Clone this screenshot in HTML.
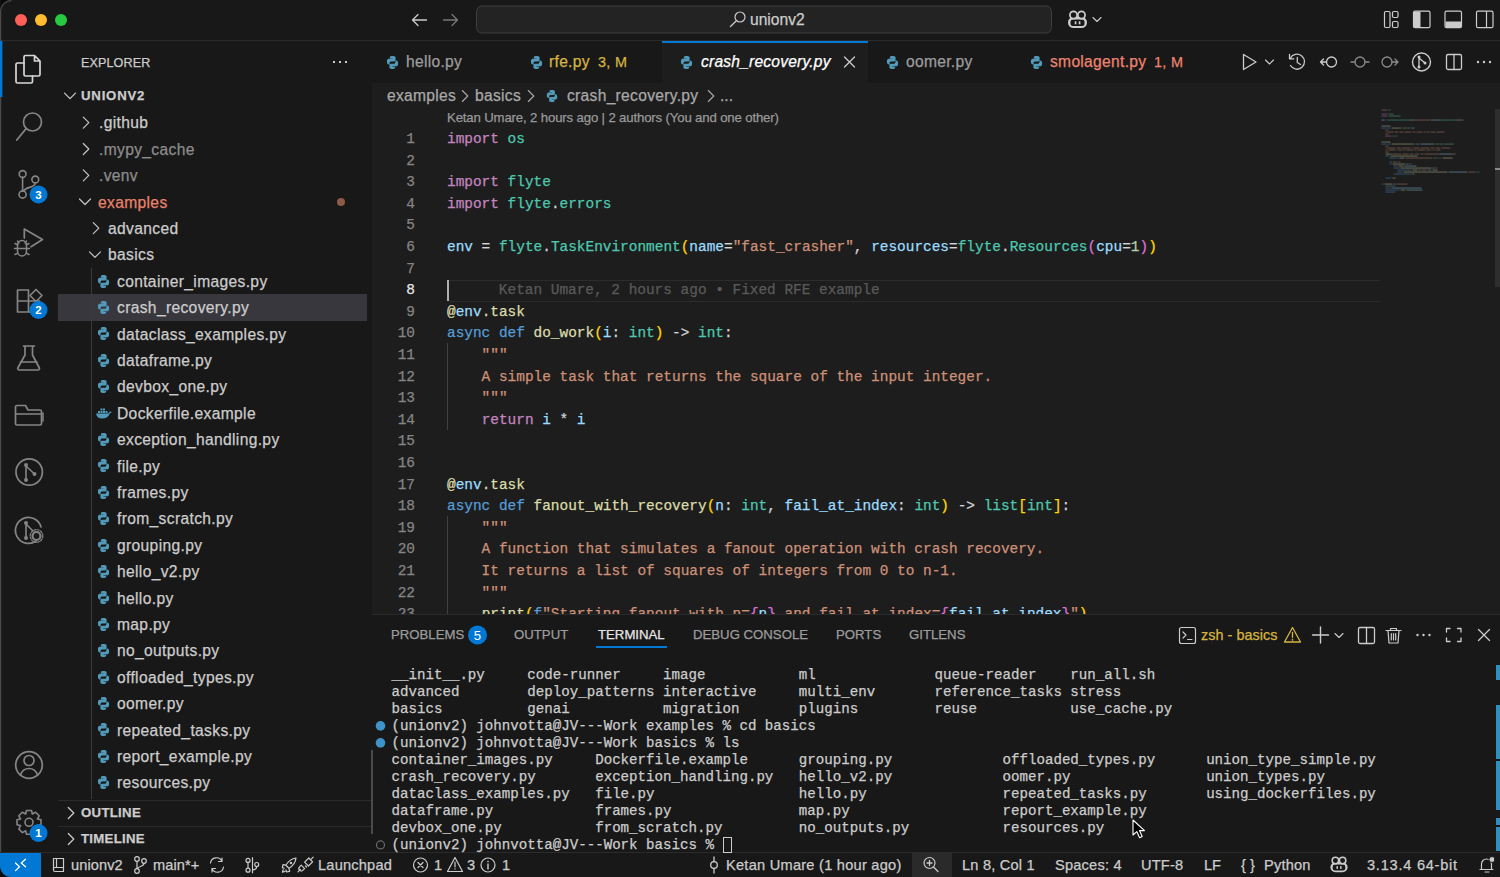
<!DOCTYPE html>
<html><head><meta charset="utf-8">
<style>
*{box-sizing:border-box;margin:0;padding:0}
html,body{width:1500px;height:877px;overflow:hidden;background:#181818;font-family:"Liberation Sans",sans-serif;color:#cccccc}
.abs{position:absolute}
.t{position:absolute;white-space:pre;-webkit-text-stroke:0.25px currentColor}
.m{font-family:"Liberation Mono",monospace}
svg{position:absolute;overflow:visible}
</style></head><body>
<svg width="0" height="0" style="position:absolute;left:0;top:0">
<defs>
<symbol id="py" viewBox="0 0 16 16"><path fill="#519aba" d="M7.9 1C5 1 5.2 2.3 5.2 2.3V3.6H8V4H4C4 4 2 3.8 2 7C2 10.2 3.8 10 3.8 10H4.9V8.6C4.9 8.6 4.8 6.8 6.6 6.8H9.6C9.6 6.8 11.3 6.8 11.3 5.2V2.6C11.3 2.6 11.5 1 7.9 1Z M8.1 15C11 15 10.8 13.7 10.8 13.7V12.4H8V12H12C12 12 14 12.2 14 9C14 5.8 12.2 6 12.2 6H11.1V7.4C11.1 7.4 11.2 9.2 9.4 9.2H6.4C6.4 9.2 4.7 9.2 4.7 10.8V13.4C4.7 13.4 4.5 15 8.1 15Z"/></symbol>
</defs>
</svg>

<div class="abs" style="left:0px;top:0px;width:1500px;height:40px;background:#181818;"></div>
<div class="abs" style="left:0px;top:40px;width:1500px;height:1px;background:#2b2b2b;"></div>
<div class="abs" style="left:0px;top:41px;width:58px;height:810px;background:#181818;"></div>
<div class="abs" style="left:58px;top:41px;width:314px;height:810px;background:#181818;"></div>
<div class="abs" style="left:372px;top:41px;width:1128px;height:573px;background:#1d1d1d;"></div>
<div class="abs" style="left:372px;top:41px;width:1128px;height:42px;background:#181818;"></div>
<div class="abs" style="left:372px;top:614px;width:1128px;height:1px;background:#2b2b2b;"></div>
<div class="abs" style="left:372px;top:615px;width:1128px;height:236px;background:#181818;"></div>
<div class="abs" style="left:0px;top:851px;width:1500px;height:1px;background:#181818;"></div>
<div class="abs" style="left:0px;top:852px;width:1500px;height:1px;background:#2b2b2b;"></div>
<div class="abs" style="left:0px;top:853px;width:1500px;height:24px;background:#181818;"></div>
<div class="abs" style="left:15px;top:14px;width:12px;height:12px;border-radius:6px;background:#ff5f57"></div>
<div class="abs" style="left:35px;top:14px;width:12px;height:12px;border-radius:6px;background:#febc2e"></div>
<div class="abs" style="left:55px;top:14px;width:12px;height:12px;border-radius:6px;background:#28c840"></div>
<svg style="left:0;top:0" width="1500" height="40" fill="none" stroke-linecap="round" stroke-linejoin="round"><path d="M412.5 20H426.5M412.5 20L418 14.5M412.5 20L418 25.5" stroke="#cccccc" stroke-width="1.3"/><path d="M457.5 20H443.5M457.5 20L452 14.5M457.5 20L452 25.5" stroke="#777" stroke-width="1.3"/><rect x="476.5" y="6" width="575" height="27" rx="5.5" fill="#232323" stroke="#3f3f3f"/><circle cx="740" cy="17" r="5" stroke="#cccccc" stroke-width="1.2"/><path d="M736.3 20.7L730.5 26.5" stroke="#cccccc" stroke-width="1.3"/><path d="M1093 17.5L1097 21.5L1101 17.5" stroke="#cccccc" stroke-width="1.1"/><rect x="1384.5" y="11.5" width="5.5" height="16" rx="1.2" stroke="#cccccc" stroke-width="1.2"/><rect x="1392.5" y="11.5" width="5.5" height="6" rx="1.2" stroke="#cccccc" stroke-width="1.2"/><rect x="1392.5" y="21.5" width="5.5" height="6" rx="1.2" stroke="#cccccc" stroke-width="1.2"/><rect x="1413.5" y="11.2" width="16.5" height="16.5" rx="1.5" stroke="#cccccc" stroke-width="1.2"/><rect x="1414" y="11.7" width="6.5" height="15.5" fill="#cccccc" stroke="none"/><rect x="1445" y="11.2" width="16.5" height="16.5" rx="1.5" stroke="#cccccc" stroke-width="1.2"/><rect x="1445.5" y="21.5" width="15.5" height="5.8" fill="#cccccc" stroke="none"/><rect x="1476.5" y="11.2" width="16.5" height="16.5" rx="1.5" stroke="#cccccc" stroke-width="1.2"/><path d="M1486.5 11.5V27.5" stroke="#cccccc" stroke-width="1.2"/><rect x="1068.00" y="17.00" width="19.00" height="11.00" rx="5.50" fill="#cccccc"/><rect x="1070.50" y="19.50" width="14.00" height="6.50" rx="2.50" fill="#181818"/><rect x="1074.70" y="21.30" width="1.70" height="3.00" fill="#cccccc"/><rect x="1078.70" y="21.30" width="1.70" height="3.00" fill="#cccccc"/><circle cx="1073.50" cy="15.00" r="3.60" fill="#181818" stroke="#cccccc" stroke-width="1.70"/><circle cx="1081.50" cy="15.00" r="3.60" fill="#181818" stroke="#cccccc" stroke-width="1.70"/></svg>
<div class="t" style="left:750px;top:9.86px;height:20.28px;line-height:20.28px;font-size:15.6px;color:#cccccc;">unionv2</div>
<svg style="left:0;top:0" width="58" height="851" fill="none" stroke-linecap="round" stroke-linejoin="round">
<rect x="0" y="41" width="2.4" height="56" fill="#0078d4" stroke="none"/>
<path d="M24 74.5V57A1.5 1.5 0 0 1 25.5 55.5H34.5L40 61V74.5A1.5 1.5 0 0 1 38.5 76H25.5A1.5 1.5 0 0 1 24 74.5Z M34.5 55.5V61H40" stroke="#d7d7d7" stroke-width="1.7"/>
<path d="M24 63H17.5A1.5 1.5 0 0 0 16 64.5V81.5A1.5 1.5 0 0 0 17.5 83H31A1.5 1.5 0 0 0 32.5 81.5V76" stroke="#d7d7d7" stroke-width="1.7"/>
<circle cx="32.5" cy="122" r="9" stroke="#858585" stroke-width="1.7"/><path d="M26.2 128.5L16.8 140" stroke="#858585" stroke-width="1.8"/>
<circle cx="22.6" cy="174" r="3.4" stroke="#858585" stroke-width="1.6"/><circle cx="35.3" cy="179.5" r="3.4" stroke="#858585" stroke-width="1.6"/><circle cx="22.6" cy="194.5" r="3.6" stroke="#858585" stroke-width="1.6"/>
<path d="M22.6 177.4V190.9M35.3 183C35.3 188 27 186 23.5 191" stroke="#858585" stroke-width="1.6"/>
<path d="M24.3 238V229L42.5 239.5L31 246.8" stroke="#858585" stroke-width="1.7"/>
<path d="M17.5 245.5A4.5 5 0 0 1 26.5 245.5V251A4.5 5 0 0 1 17.5 251Z M14.5 248.5H17.5M26.5 248.5H29.5M15 243.5L18 245M29 243.5L26 245M15 254.5L18 253M29 254.5L26 253M19 243L17.5 241M25 243L26.5 241M17.5 248.5H26.5" stroke="#858585" stroke-width="1.5"/>
<path d="M17.5 290H28.5V312H17.5Z M17.5 301H39.5V312H28.5" stroke="#858585" stroke-width="1.7"/><path d="M30 295.5L36 289.5L42 295.5L36 301.5Z" stroke="#858585" stroke-width="1.7"/>
<path d="M23.5 346H34.5M25 346V355L17.8 368A1.5 1.5 0 0 0 19.2 370H38A1.5 1.5 0 0 0 39.4 368L32.5 355V346M20.5 362H37" stroke="#858585" stroke-width="1.7"/>
<path d="M15.5 408V423.5A1.5 1.5 0 0 0 17 425H40A1.5 1.5 0 0 0 41.5 423.5V411.5A1.5 1.5 0 0 0 40 410H28L25.5 405.5H17A1.5 1.5 0 0 0 15.5 407Z M15.5 414H41.5" stroke="#858585" stroke-width="1.7"/><path d="M43 413V421" stroke="#858585" stroke-width="1.5"/>
<circle cx="29.2" cy="472" r="13.2" stroke="#858585" stroke-width="1.7"/><circle cx="26" cy="465" r="2" fill="#858585" stroke="none"/><circle cx="26" cy="480" r="2" fill="#858585" stroke="none"/><circle cx="34.5" cy="474" r="2" fill="#858585" stroke="none"/><path d="M26 465V480M26 466L34.5 474" stroke="#858585" stroke-width="1.6"/>
<path d="M36 541A13 13 0 1 1 41 527" stroke="#858585" stroke-width="1.7"/><circle cx="26" cy="523" r="2" fill="#858585" stroke="none"/><circle cx="26" cy="538" r="2" fill="#858585" stroke="none"/><path d="M26 523V538M26 524L33 531" stroke="#858585" stroke-width="1.6"/><circle cx="36.5" cy="536" r="4" stroke="#858585" stroke-width="2.2"/><circle cx="36.5" cy="536" r="6.3" stroke="#858585" stroke-width="1.2" stroke-dasharray="2 1.3"/>
<circle cx="29" cy="765" r="13.3" stroke="#858585" stroke-width="1.7"/><circle cx="29" cy="760.5" r="5" stroke="#858585" stroke-width="1.7"/><path d="M20.5 775C22 770.5 25 768.5 29 768.5C33 768.5 36 770.5 37.5 775" stroke="#858585" stroke-width="1.7"/>
<path d="M26.5 810.5H31.5L32.3 814L35.6 812.2L39.2 815.8L37.4 819L41 819.8V824.8L37.4 825.6L39.2 829L35.6 832.6L32.3 830.8L31.5 834.3H26.5L25.7 830.8L22.4 832.6L18.8 829L20.6 825.6L17 824.8V819.8L20.6 819L18.8 815.8L22.4 812.2L25.7 814Z" stroke="#858585" stroke-width="1.6"/><circle cx="29" cy="822.3" r="4" stroke="#858585" stroke-width="1.6"/>
<circle cx="38.5" cy="194.5" r="9" fill="#0078d4" stroke="#181818" stroke-width="0"/>
<text x="38.5" y="198.7" fill="#ffffff" stroke="none" font-family="Liberation Sans" font-weight="bold" font-size="11.5" text-anchor="middle">3</text>
<circle cx="38.5" cy="310" r="9" fill="#0078d4" stroke="#181818" stroke-width="0"/>
<text x="38.5" y="314.2" fill="#ffffff" stroke="none" font-family="Liberation Sans" font-weight="bold" font-size="11.5" text-anchor="middle">2</text>
<circle cx="38.5" cy="833" r="9" fill="#0078d4" stroke="#181818" stroke-width="0"/>
<text x="38.5" y="837.2" fill="#ffffff" stroke="none" font-family="Liberation Sans" font-weight="bold" font-size="11.5" text-anchor="middle">1</text>
</svg>
<div class="t" style="left:81px;top:54.61px;height:16.38px;line-height:16.38px;font-size:12.6px;color:#cccccc;letter-spacing:0.1px">EXPLORER</div>
<div class="abs" style="left:333px;top:61px;width:2px;height:2px;background:#cccccc;"></div>
<div class="abs" style="left:339px;top:61px;width:2px;height:2px;background:#cccccc;"></div>
<div class="abs" style="left:345px;top:61px;width:2px;height:2px;background:#cccccc;"></div>
<svg style="left:0;top:0" width="1" height="1" fill="none"><path d="M64.5 93.2L70 98.7L75.5 93.2" stroke="#cccccc" stroke-width="1.2" stroke-linecap="round" stroke-linejoin="round"/></svg>
<div class="t" style="left:81px;top:87.42px;height:17.16px;line-height:17.16px;font-size:13.2px;color:#cccccc;font-weight:bold;letter-spacing:0.8px">UNIONV2</div>
<div class="abs" style="left:58px;top:294.2px;width:309px;height:26.4px;background:#37373d;"></div>
<svg style="left:0;top:0" width="1" height="1" fill="none"><path d="M83.3 117.1L88.8 122.6L83.3 128.1" stroke="#c5c5c5" stroke-width="1.2" stroke-linecap="round" stroke-linejoin="round"/></svg>
<div class="t" style="left:99px;top:113.46px;height:20.28px;line-height:20.28px;font-size:15.6px;color:#cccccc;letter-spacing:0.35px">.github</div>
<svg style="left:0;top:0" width="1" height="1" fill="none"><path d="M83.3 143.5L88.8 149.0L83.3 154.5" stroke="#c5c5c5" stroke-width="1.2" stroke-linecap="round" stroke-linejoin="round"/></svg>
<div class="t" style="left:99px;top:139.86px;height:20.28px;line-height:20.28px;font-size:15.6px;color:#8c8c8c;letter-spacing:0.35px">.mypy_cache</div>
<svg style="left:0;top:0" width="1" height="1" fill="none"><path d="M83.3 169.89999999999998L88.8 175.39999999999998L83.3 180.89999999999998" stroke="#c5c5c5" stroke-width="1.2" stroke-linecap="round" stroke-linejoin="round"/></svg>
<div class="t" style="left:99px;top:166.26px;height:20.28px;line-height:20.28px;font-size:15.6px;color:#8c8c8c;letter-spacing:0.35px">.venv</div>
<svg style="left:0;top:0" width="1" height="1" fill="none"><path d="M79.5 198.99999999999997L85 204.49999999999997L90.5 198.99999999999997" stroke="#c5c5c5" stroke-width="1.2" stroke-linecap="round" stroke-linejoin="round"/></svg>
<div class="t" style="left:98px;top:192.66px;height:20.28px;line-height:20.28px;font-size:15.6px;color:#e8826c;letter-spacing:0.35px">examples</div>
<svg style="left:0;top:0" width="1" height="1" fill="none"><path d="M93.3 222.7L98.8 228.2L93.3 233.7" stroke="#c5c5c5" stroke-width="1.2" stroke-linecap="round" stroke-linejoin="round"/></svg>
<div class="t" style="left:108px;top:219.06px;height:20.28px;line-height:20.28px;font-size:15.6px;color:#cccccc;letter-spacing:0.35px">advanced</div>
<svg style="left:0;top:0" width="1" height="1" fill="none"><path d="M89.5 251.79999999999998L95 257.3L100.5 251.79999999999998" stroke="#c5c5c5" stroke-width="1.2" stroke-linecap="round" stroke-linejoin="round"/></svg>
<div class="t" style="left:108px;top:245.46px;height:20.28px;line-height:20.28px;font-size:15.6px;color:#cccccc;letter-spacing:0.35px">basics</div>
<div class="abs" style="left:337px;top:198px;width:8px;height:8px;border-radius:4px;background:#8e5a45"></div>
<div class="abs" style="left:91px;top:268px;width:1px;height:531px;background:#3a3a3a;"></div>
<svg style="left:96px;top:273.5px" width="15" height="15"><use href="#py"/></svg>
<div class="t" style="left:117px;top:271.86px;height:20.28px;line-height:20.28px;font-size:15.6px;color:#cccccc;letter-spacing:0.35px">container_images.py</div>
<svg style="left:96px;top:299.9px" width="15" height="15"><use href="#py"/></svg>
<div class="t" style="left:117px;top:298.26px;height:20.28px;line-height:20.28px;font-size:15.6px;color:#cccccc;letter-spacing:0.35px">crash_recovery.py</div>
<svg style="left:96px;top:326.3px" width="15" height="15"><use href="#py"/></svg>
<div class="t" style="left:117px;top:324.66px;height:20.28px;line-height:20.28px;font-size:15.6px;color:#cccccc;letter-spacing:0.35px">dataclass_examples.py</div>
<svg style="left:96px;top:352.7px" width="15" height="15"><use href="#py"/></svg>
<div class="t" style="left:117px;top:351.06px;height:20.28px;line-height:20.28px;font-size:15.6px;color:#cccccc;letter-spacing:0.35px">dataframe.py</div>
<svg style="left:96px;top:379.1px" width="15" height="15"><use href="#py"/></svg>
<div class="t" style="left:117px;top:377.46px;height:20.28px;line-height:20.28px;font-size:15.6px;color:#cccccc;letter-spacing:0.35px">devbox_one.py</div>
<svg style="left:95px;top:405.0px" width="17" height="16" viewBox="0 0 17 16"><path fill="#519aba" d="M1 8.5H13.5C14.2 7.8 14.6 7 15 6.3C15.6 6.5 16.3 6.8 16.6 7.3C16.2 7.8 15.6 8.2 14.9 8.3C13.8 11.8 11 13.5 7 13.5C3.6 13.5 1.4 11.6 1 8.5Z"/><rect x="3" y="6" width="2" height="2" fill="#519aba"/><rect x="5.5" y="6" width="2" height="2" fill="#519aba"/><rect x="8" y="6" width="2" height="2" fill="#519aba"/><rect x="5.5" y="3.5" width="2" height="2" fill="#519aba"/><rect x="8" y="3.5" width="2" height="2" fill="#519aba"/><rect x="10.5" y="6" width="2" height="2" fill="#519aba"/></svg>
<div class="t" style="left:117px;top:403.86px;height:20.28px;line-height:20.28px;font-size:15.6px;color:#cccccc;letter-spacing:0.35px">Dockerfile.example</div>
<svg style="left:96px;top:431.9px" width="15" height="15"><use href="#py"/></svg>
<div class="t" style="left:117px;top:430.26px;height:20.28px;line-height:20.28px;font-size:15.6px;color:#cccccc;letter-spacing:0.35px">exception_handling.py</div>
<svg style="left:96px;top:458.3px" width="15" height="15"><use href="#py"/></svg>
<div class="t" style="left:117px;top:456.66px;height:20.28px;line-height:20.28px;font-size:15.6px;color:#cccccc;letter-spacing:0.35px">file.py</div>
<svg style="left:96px;top:484.7px" width="15" height="15"><use href="#py"/></svg>
<div class="t" style="left:117px;top:483.06px;height:20.28px;line-height:20.28px;font-size:15.6px;color:#cccccc;letter-spacing:0.35px">frames.py</div>
<svg style="left:96px;top:511.1px" width="15" height="15"><use href="#py"/></svg>
<div class="t" style="left:117px;top:509.46px;height:20.28px;line-height:20.28px;font-size:15.6px;color:#cccccc;letter-spacing:0.35px">from_scratch.py</div>
<svg style="left:96px;top:537.5px" width="15" height="15"><use href="#py"/></svg>
<div class="t" style="left:117px;top:535.86px;height:20.28px;line-height:20.28px;font-size:15.6px;color:#cccccc;letter-spacing:0.35px">grouping.py</div>
<svg style="left:96px;top:563.9px" width="15" height="15"><use href="#py"/></svg>
<div class="t" style="left:117px;top:562.26px;height:20.28px;line-height:20.28px;font-size:15.6px;color:#cccccc;letter-spacing:0.35px">hello_v2.py</div>
<svg style="left:96px;top:590.3px" width="15" height="15"><use href="#py"/></svg>
<div class="t" style="left:117px;top:588.66px;height:20.28px;line-height:20.28px;font-size:15.6px;color:#cccccc;letter-spacing:0.35px">hello.py</div>
<svg style="left:96px;top:616.7px" width="15" height="15"><use href="#py"/></svg>
<div class="t" style="left:117px;top:615.06px;height:20.28px;line-height:20.28px;font-size:15.6px;color:#cccccc;letter-spacing:0.35px">map.py</div>
<svg style="left:96px;top:643.1px" width="15" height="15"><use href="#py"/></svg>
<div class="t" style="left:117px;top:641.46px;height:20.28px;line-height:20.28px;font-size:15.6px;color:#cccccc;letter-spacing:0.35px">no_outputs.py</div>
<svg style="left:96px;top:669.5px" width="15" height="15"><use href="#py"/></svg>
<div class="t" style="left:117px;top:667.86px;height:20.28px;line-height:20.28px;font-size:15.6px;color:#cccccc;letter-spacing:0.35px">offloaded_types.py</div>
<svg style="left:96px;top:695.9px" width="15" height="15"><use href="#py"/></svg>
<div class="t" style="left:117px;top:694.26px;height:20.28px;line-height:20.28px;font-size:15.6px;color:#cccccc;letter-spacing:0.35px">oomer.py</div>
<svg style="left:96px;top:722.3px" width="15" height="15"><use href="#py"/></svg>
<div class="t" style="left:117px;top:720.66px;height:20.28px;line-height:20.28px;font-size:15.6px;color:#cccccc;letter-spacing:0.35px">repeated_tasks.py</div>
<svg style="left:96px;top:748.7px" width="15" height="15"><use href="#py"/></svg>
<div class="t" style="left:117px;top:747.06px;height:20.28px;line-height:20.28px;font-size:15.6px;color:#cccccc;letter-spacing:0.35px">report_example.py</div>
<svg style="left:96px;top:775.1px" width="15" height="15"><use href="#py"/></svg>
<div class="t" style="left:117px;top:773.46px;height:20.28px;line-height:20.28px;font-size:15.6px;color:#cccccc;letter-spacing:0.35px">resources.py</div>
<div class="abs" style="left:58px;top:800px;width:314px;height:1px;background:#2b2b2b;"></div>
<svg style="left:0;top:0" width="1" height="1" fill="none"><path d="M68.3 807.5L73.8 813L68.3 818.5" stroke="#cccccc" stroke-width="1.2" stroke-linecap="round" stroke-linejoin="round"/></svg>
<div class="t" style="left:81px;top:804.42px;height:17.16px;line-height:17.16px;font-size:13.2px;color:#cccccc;font-weight:bold;letter-spacing:0.3px">OUTLINE</div>
<div class="abs" style="left:58px;top:826px;width:314px;height:1px;background:#2b2b2b;"></div>
<svg style="left:0;top:0" width="1" height="1" fill="none"><path d="M68.3 833.5L73.8 839L68.3 844.5" stroke="#cccccc" stroke-width="1.2" stroke-linecap="round" stroke-linejoin="round"/></svg>
<div class="t" style="left:81px;top:830.42px;height:17.16px;line-height:17.16px;font-size:13.2px;color:#cccccc;font-weight:bold;letter-spacing:0.3px">TIMELINE</div>
<div class="abs" style="left:662px;top:41px;width:206px;height:42px;background:#1d1d1d;"></div>
<div class="abs" style="left:662px;top:41px;width:206px;height:1.6px;background:#0078d4;"></div>
<svg style="left:385px;top:54.5px" width="15" height="15"><use href="#py"/></svg>
<div class="t" style="left:406px;top:51.86px;height:20.28px;line-height:20.28px;font-size:15.6px;color:#9d9d9d;letter-spacing:0.3px">hello.py</div>
<svg style="left:529px;top:54.5px" width="15" height="15"><use href="#py"/></svg>
<div class="t" style="left:549px;top:51.86px;height:20.28px;line-height:20.28px;font-size:15.6px;color:#d6b443;letter-spacing:0.3px">rfe.py</div>
<div class="t" style="left:598px;top:52.64px;height:18.72px;line-height:18.72px;font-size:14.4px;color:#d6b443;letter-spacing:0.3px">3, M</div>
<svg style="left:679px;top:54.5px" width="15" height="15"><use href="#py"/></svg>
<div class="t" style="left:701px;top:51.86px;height:20.28px;line-height:20.28px;font-size:15.6px;color:#ffffff;font-style:italic;letter-spacing:0.2px">crash_recovery.py</div>
<svg style="left:0;top:0" width="1" height="1" fill="none"><path d="M844.5 57L854.5 67M854.5 57L844.5 67" stroke="#cccccc" stroke-width="1.3" stroke-linecap="round"/></svg>
<svg style="left:885px;top:54.5px" width="15" height="15"><use href="#py"/></svg>
<div class="t" style="left:906px;top:51.86px;height:20.28px;line-height:20.28px;font-size:15.6px;color:#9d9d9d;letter-spacing:0.3px">oomer.py</div>
<svg style="left:1029px;top:54.5px" width="15" height="15"><use href="#py"/></svg>
<div class="t" style="left:1050px;top:51.86px;height:20.28px;line-height:20.28px;font-size:15.6px;color:#ee8470;letter-spacing:0.3px">smolagent.py</div>
<div class="t" style="left:1154px;top:52.64px;height:18.72px;line-height:18.72px;font-size:14.4px;color:#ee8470;letter-spacing:0.3px">1, M</div>
<svg style="left:0;top:0" width="1" height="1" fill="none" stroke-linecap="round" stroke-linejoin="round">
<path d="M1243.5 54.5L1256 62L1243.5 69.5Z" stroke="#cccccc" stroke-width="1.3"/>
<path d="M1265.5 60L1269.5 64L1273.5 60" stroke="#cccccc" stroke-width="1.1"/>
<path d="M1290.2 58.5A7.5 7.5 0 1 1 1290.5 65.5M1289.5 54.5V58.8H1293.8M1297.3 57.5V62.5L1300.5 64.5" stroke="#cccccc" stroke-width="1.3"/>
<circle cx="1331.5" cy="62" r="5" stroke="#cccccc" stroke-width="1.3"/><path d="M1326.5 62H1320.5M1323.5 59L1320.5 62L1323.5 65" stroke="#cccccc" stroke-width="1.3"/>
<circle cx="1360" cy="62" r="5" stroke="#8a8a8a" stroke-width="1.3"/><path d="M1351 62H1355M1365 62H1369" stroke="#8a8a8a" stroke-width="1.3"/>
<circle cx="1387" cy="62" r="5" stroke="#8a8a8a" stroke-width="1.3"/><path d="M1392 62H1398M1395 59L1398 62L1395 65" stroke="#8a8a8a" stroke-width="1.3"/>
<circle cx="1421.5" cy="62" r="9" stroke="#cccccc" stroke-width="1.4"/><circle cx="1419" cy="57" r="1.5" fill="#cccccc"/><circle cx="1419" cy="67" r="1.5" fill="#cccccc"/><circle cx="1425" cy="63" r="1.5" fill="#cccccc"/><path d="M1419 57V67M1419 58L1425 63" stroke="#cccccc" stroke-width="1.3"/>
<rect x="1446.5" y="54.5" width="15" height="15" rx="1.5" stroke="#cccccc" stroke-width="1.3"/><path d="M1454 54.5V69.5" stroke="#cccccc" stroke-width="1.3"/>
<circle cx="1478" cy="62" r="1.2" fill="#cccccc" stroke="none"/>
<circle cx="1484" cy="62" r="1.2" fill="#cccccc" stroke="none"/>
<circle cx="1490" cy="62" r="1.2" fill="#cccccc" stroke="none"/>
</svg>
<div class="t" style="left:387px;top:85.86px;height:20.28px;line-height:20.28px;font-size:15.6px;color:#a9a9a9;letter-spacing:0.3px">examples</div>
<svg style="left:0;top:0" width="1" height="1" fill="none"><path d="M462.3 90.5L467.8 96L462.3 101.5" stroke="#a9a9a9" stroke-width="1.1" stroke-linecap="round" stroke-linejoin="round"/></svg>
<div class="t" style="left:475px;top:85.86px;height:20.28px;line-height:20.28px;font-size:15.6px;color:#a9a9a9;letter-spacing:0.3px">basics</div>
<svg style="left:0;top:0" width="1" height="1" fill="none"><path d="M528.3 90.5L533.8 96L528.3 101.5" stroke="#a9a9a9" stroke-width="1.1" stroke-linecap="round" stroke-linejoin="round"/></svg>
<svg style="left:545px;top:89.0px" width="14" height="14"><use href="#py"/></svg>
<div class="t" style="left:567px;top:85.86px;height:20.28px;line-height:20.28px;font-size:15.6px;color:#a9a9a9;letter-spacing:0.3px">crash_recovery.py</div>
<svg style="left:0;top:0" width="1" height="1" fill="none"><path d="M708.3 90.5L713.8 96L708.3 101.5" stroke="#a9a9a9" stroke-width="1.1" stroke-linecap="round" stroke-linejoin="round"/></svg>
<div class="t" style="left:720px;top:85.86px;height:20.28px;line-height:20.28px;font-size:15.6px;color:#a9a9a9;">...</div>
<div class="t" style="left:447px;top:109.42px;height:17.16px;line-height:17.16px;font-size:13.2px;color:#999999;letter-spacing:-0.15px">Ketan Umare, 2 hours ago | 2 authors (You and one other)</div>
<div class="abs" style="left:449px;top:279.9px;width:931px;height:1px;background:#2c2c2c;"></div>
<div class="abs" style="left:449px;top:300.5px;width:931px;height:1px;background:#2c2c2c;"></div>
<div class="abs" style="left:372px;top:109px;width:1008px;height:505px;overflow:hidden">
<div class="abs" style="left:75px;top:234.2px;width:1px;height:86.4px;background:#404040;"></div>
<div class="abs" style="left:75px;top:407.0px;width:1px;height:108.0px;background:#404040;"></div>
<div class="t m" style="left:0px;width:43px;text-align:right;top:19.90px;height:21.6px;line-height:21.6px;font-size:14.43px;color:#858585">1</div>
<div class="t m" style="left:75px;top:19.90px;height:21.6px;line-height:21.6px;font-size:14.43px"><span style="color:#c586c0">import</span><span style="color:#d4d4d4"> </span><span style="color:#4ec9b0">os</span></div>
<div class="t m" style="left:0px;width:43px;text-align:right;top:41.50px;height:21.6px;line-height:21.6px;font-size:14.43px;color:#858585">2</div>
<div class="t m" style="left:0px;width:43px;text-align:right;top:63.10px;height:21.6px;line-height:21.6px;font-size:14.43px;color:#858585">3</div>
<div class="t m" style="left:75px;top:63.10px;height:21.6px;line-height:21.6px;font-size:14.43px"><span style="color:#c586c0">import</span><span style="color:#d4d4d4"> </span><span style="color:#4ec9b0">flyte</span></div>
<div class="t m" style="left:0px;width:43px;text-align:right;top:84.70px;height:21.6px;line-height:21.6px;font-size:14.43px;color:#858585">4</div>
<div class="t m" style="left:75px;top:84.70px;height:21.6px;line-height:21.6px;font-size:14.43px"><span style="color:#c586c0">import</span><span style="color:#d4d4d4"> </span><span style="color:#4ec9b0">flyte</span><span style="color:#d4d4d4">.</span><span style="color:#4ec9b0">errors</span></div>
<div class="t m" style="left:0px;width:43px;text-align:right;top:106.30px;height:21.6px;line-height:21.6px;font-size:14.43px;color:#858585">5</div>
<div class="t m" style="left:0px;width:43px;text-align:right;top:127.90px;height:21.6px;line-height:21.6px;font-size:14.43px;color:#858585">6</div>
<div class="t m" style="left:75px;top:127.90px;height:21.6px;line-height:21.6px;font-size:14.43px"><span style="color:#9cdcfe">env</span><span style="color:#d4d4d4"> = </span><span style="color:#4ec9b0">flyte</span><span style="color:#d4d4d4">.</span><span style="color:#4ec9b0">TaskEnvironment</span><span style="color:#ffd700">(</span><span style="color:#9cdcfe">name</span><span style="color:#d4d4d4">=</span><span style="color:#ce9178">&quot;fast_crasher&quot;</span><span style="color:#d4d4d4">, </span><span style="color:#9cdcfe">resources</span><span style="color:#d4d4d4">=</span><span style="color:#4ec9b0">flyte</span><span style="color:#d4d4d4">.</span><span style="color:#4ec9b0">Resources</span><span style="color:#da70d6">(</span><span style="color:#9cdcfe">cpu</span><span style="color:#d4d4d4">=</span><span style="color:#b5cea8">1</span><span style="color:#da70d6">)</span><span style="color:#ffd700">)</span></div>
<div class="t m" style="left:0px;width:43px;text-align:right;top:149.50px;height:21.6px;line-height:21.6px;font-size:14.43px;color:#858585">7</div>
<div class="t m" style="left:0px;width:43px;text-align:right;top:171.10px;height:21.6px;line-height:21.6px;font-size:14.43px;color:#e6e6e6">8</div>
<div class="t m" style="left:0px;width:43px;text-align:right;top:192.70px;height:21.6px;line-height:21.6px;font-size:14.43px;color:#858585">9</div>
<div class="t m" style="left:75px;top:192.70px;height:21.6px;line-height:21.6px;font-size:14.43px"><span style="color:#dcdcaa">@</span><span style="color:#9cdcfe">env</span><span style="color:#dcdcaa">.</span><span style="color:#dcdcaa">task</span></div>
<div class="t m" style="left:0px;width:43px;text-align:right;top:214.30px;height:21.6px;line-height:21.6px;font-size:14.43px;color:#858585">10</div>
<div class="t m" style="left:75px;top:214.30px;height:21.6px;line-height:21.6px;font-size:14.43px"><span style="color:#569cd6">async</span><span style="color:#d4d4d4"> </span><span style="color:#569cd6">def</span><span style="color:#d4d4d4"> </span><span style="color:#dcdcaa">do_work</span><span style="color:#ffd700">(</span><span style="color:#9cdcfe">i</span><span style="color:#d4d4d4">: </span><span style="color:#4ec9b0">int</span><span style="color:#ffd700">)</span><span style="color:#d4d4d4"> -&gt; </span><span style="color:#4ec9b0">int</span><span style="color:#d4d4d4">:</span></div>
<div class="t m" style="left:0px;width:43px;text-align:right;top:235.90px;height:21.6px;line-height:21.6px;font-size:14.43px;color:#858585">11</div>
<div class="t m" style="left:75px;top:235.90px;height:21.6px;line-height:21.6px;font-size:14.43px"><span style="color:#ce9178">    &quot;&quot;&quot;</span></div>
<div class="t m" style="left:0px;width:43px;text-align:right;top:257.50px;height:21.6px;line-height:21.6px;font-size:14.43px;color:#858585">12</div>
<div class="t m" style="left:75px;top:257.50px;height:21.6px;line-height:21.6px;font-size:14.43px"><span style="color:#ce9178">    A simple task that returns the square of the input integer.</span></div>
<div class="t m" style="left:0px;width:43px;text-align:right;top:279.10px;height:21.6px;line-height:21.6px;font-size:14.43px;color:#858585">13</div>
<div class="t m" style="left:75px;top:279.10px;height:21.6px;line-height:21.6px;font-size:14.43px"><span style="color:#ce9178">    &quot;&quot;&quot;</span></div>
<div class="t m" style="left:0px;width:43px;text-align:right;top:300.70px;height:21.6px;line-height:21.6px;font-size:14.43px;color:#858585">14</div>
<div class="t m" style="left:75px;top:300.70px;height:21.6px;line-height:21.6px;font-size:14.43px"><span style="color:#d4d4d4">    </span><span style="color:#c586c0">return</span><span style="color:#d4d4d4"> </span><span style="color:#9cdcfe">i</span><span style="color:#d4d4d4"> * </span><span style="color:#9cdcfe">i</span></div>
<div class="t m" style="left:0px;width:43px;text-align:right;top:322.30px;height:21.6px;line-height:21.6px;font-size:14.43px;color:#858585">15</div>
<div class="t m" style="left:0px;width:43px;text-align:right;top:343.90px;height:21.6px;line-height:21.6px;font-size:14.43px;color:#858585">16</div>
<div class="t m" style="left:0px;width:43px;text-align:right;top:365.50px;height:21.6px;line-height:21.6px;font-size:14.43px;color:#858585">17</div>
<div class="t m" style="left:75px;top:365.50px;height:21.6px;line-height:21.6px;font-size:14.43px"><span style="color:#dcdcaa">@</span><span style="color:#9cdcfe">env</span><span style="color:#dcdcaa">.</span><span style="color:#dcdcaa">task</span></div>
<div class="t m" style="left:0px;width:43px;text-align:right;top:387.10px;height:21.6px;line-height:21.6px;font-size:14.43px;color:#858585">18</div>
<div class="t m" style="left:75px;top:387.10px;height:21.6px;line-height:21.6px;font-size:14.43px"><span style="color:#569cd6">async</span><span style="color:#d4d4d4"> </span><span style="color:#569cd6">def</span><span style="color:#d4d4d4"> </span><span style="color:#dcdcaa">fanout_with_recovery</span><span style="color:#ffd700">(</span><span style="color:#9cdcfe">n</span><span style="color:#d4d4d4">: </span><span style="color:#4ec9b0">int</span><span style="color:#d4d4d4">, </span><span style="color:#9cdcfe">fail_at_index</span><span style="color:#d4d4d4">: </span><span style="color:#4ec9b0">int</span><span style="color:#ffd700">)</span><span style="color:#d4d4d4"> -&gt; </span><span style="color:#4ec9b0">list</span><span style="color:#ffd700">[</span><span style="color:#4ec9b0">int</span><span style="color:#ffd700">]</span><span style="color:#d4d4d4">:</span></div>
<div class="t m" style="left:0px;width:43px;text-align:right;top:408.70px;height:21.6px;line-height:21.6px;font-size:14.43px;color:#858585">19</div>
<div class="t m" style="left:75px;top:408.70px;height:21.6px;line-height:21.6px;font-size:14.43px"><span style="color:#ce9178">    &quot;&quot;&quot;</span></div>
<div class="t m" style="left:0px;width:43px;text-align:right;top:430.30px;height:21.6px;line-height:21.6px;font-size:14.43px;color:#858585">20</div>
<div class="t m" style="left:75px;top:430.30px;height:21.6px;line-height:21.6px;font-size:14.43px"><span style="color:#ce9178">    A function that simulates a fanout operation with crash recovery.</span></div>
<div class="t m" style="left:0px;width:43px;text-align:right;top:451.90px;height:21.6px;line-height:21.6px;font-size:14.43px;color:#858585">21</div>
<div class="t m" style="left:75px;top:451.90px;height:21.6px;line-height:21.6px;font-size:14.43px"><span style="color:#ce9178">    It returns a list of squares of integers from 0 to n-1.</span></div>
<div class="t m" style="left:0px;width:43px;text-align:right;top:473.50px;height:21.6px;line-height:21.6px;font-size:14.43px;color:#858585">22</div>
<div class="t m" style="left:75px;top:473.50px;height:21.6px;line-height:21.6px;font-size:14.43px"><span style="color:#ce9178">    &quot;&quot;&quot;</span></div>
<div class="t m" style="left:0px;width:43px;text-align:right;top:495.10px;height:21.6px;line-height:21.6px;font-size:14.43px;color:#858585">23</div>
<div class="t m" style="left:75px;top:495.10px;height:21.6px;line-height:21.6px;font-size:14.43px"><span style="color:#d4d4d4">    </span><span style="color:#dcdcaa">print</span><span style="color:#ffd700">(</span><span style="color:#569cd6">f</span><span style="color:#ce9178">&quot;Starting fanout with n=</span><span style="color:#da70d6">{</span><span style="color:#9cdcfe">n</span><span style="color:#da70d6">}</span><span style="color:#ce9178"> and fail_at_index=</span><span style="color:#da70d6">{</span><span style="color:#9cdcfe">fail_at_index</span><span style="color:#da70d6">}</span><span style="color:#ce9178">&quot;</span><span style="color:#ffd700">)</span></div>
<div class="abs" style="left:74.5px;top:170.9px;width:2px;height:21.6px;background:#aeafad;"></div>
<div class="t m" style="left:126.84px;top:171.10px;height:21.6px;line-height:21.6px;font-size:14.43px;color:#5a5a5a">Ketan Umare, 2 hours ago • Fixed RFE example</div>
</div>
<div class="t" style="left:391px;top:626.42px;height:17.16px;line-height:17.16px;font-size:13.2px;color:#9d9d9d;">PROBLEMS</div>
<svg style="left:0;top:0" width="1" height="1"><circle cx="477.5" cy="635" r="9.5" fill="#0078d4"/><text x="477.5" y="640" fill="#ffffff" font-family="Liberation Sans" font-size="13.2" text-anchor="middle">5</text></svg>
<div class="t" style="left:514px;top:626.42px;height:17.16px;line-height:17.16px;font-size:13.2px;color:#9d9d9d;">OUTPUT</div>
<div class="t" style="left:598px;top:626.42px;height:17.16px;line-height:17.16px;font-size:13.2px;color:#e7e7e7;">TERMINAL</div>
<div class="abs" style="left:596px;top:646px;width:71px;height:1.6px;background:#0078d4;"></div>
<div class="t" style="left:693px;top:626.42px;height:17.16px;line-height:17.16px;font-size:13.2px;color:#9d9d9d;">DEBUG CONSOLE</div>
<div class="t" style="left:836px;top:626.42px;height:17.16px;line-height:17.16px;font-size:13.2px;color:#9d9d9d;">PORTS</div>
<div class="t" style="left:909px;top:626.42px;height:17.16px;line-height:17.16px;font-size:13.2px;color:#9d9d9d;">GITLENS</div>
<svg style="left:0;top:0" width="1" height="1" fill="none" stroke-linecap="round" stroke-linejoin="round">
<rect x="1179.5" y="627.5" width="16" height="16" rx="2" stroke="#cccccc" stroke-width="1.2"/><path d="M1183 632L1186 635L1183 638M1187.5 639.5H1192" stroke="#cccccc" stroke-width="1.2"/>
<path d="M1292.5 627.5L1300.5 642H1284.5Z M1292.5 632.5V637.5" stroke="#d6b443" stroke-width="1.3"/><circle cx="1292.5" cy="639.8" r="0.9" fill="#d6b443"/>
<path d="M1320.5 627V643M1312.5 635H1328.5" stroke="#cccccc" stroke-width="1.4"/><path d="M1335 633.5L1339 637.5L1343 633.5" stroke="#cccccc" stroke-width="1.1"/>
<rect x="1358.5" y="627.5" width="16" height="16" rx="1.5" stroke="#cccccc" stroke-width="1.3"/><path d="M1366.5 627.5V643.5" stroke="#cccccc" stroke-width="1.3"/>
<path d="M1386 630.5H1401M1390.5 630.5V628.5H1396.5V630.5M1388 630.5L1389 643H1398L1399 630.5M1391.3 633.5V640M1393.5 633.5V640M1395.7 633.5V640" stroke="#cccccc" stroke-width="1.2"/>
<circle cx="1417.5" cy="635" r="1.2" fill="#cccccc" stroke="none"/>
<circle cx="1423.5" cy="635" r="1.2" fill="#cccccc" stroke="none"/>
<circle cx="1429.5" cy="635" r="1.2" fill="#cccccc" stroke="none"/>
<path d="M1446.5 632V628.5H1450M1457.5 628.5H1461V632M1461 638V641.5H1457.5M1450 641.5H1446.5V638" stroke="#cccccc" stroke-width="1.3"/>
<path d="M1478.5 629.5L1489.5 640.5M1489.5 629.5L1478.5 640.5" stroke="#cccccc" stroke-width="1.3"/>
</svg>
<div class="t" style="left:1201px;top:625.64px;height:18.72px;line-height:18.72px;font-size:14.4px;color:#d6b443;letter-spacing:0.05px">zsh - basics</div>
<div class="t m" style="left:391.5px;top:666.5px;font-size:14.15px;line-height:17px;color:#cccccc">__init__.py     code-runner     image           ml              queue-reader    run_all.sh
advanced        deploy_patterns interactive     multi_env       reference_tasks stress
basics          genai           migration       plugins         reuse           use_cache.py
(unionv2) johnvotta@JV---Work examples % cd basics
(unionv2) johnvotta@JV---Work basics % ls
container_images.py     Dockerfile.example      grouping.py             offloaded_types.py      union_type_simple.py
crash_recovery.py       exception_handling.py   hello_v2.py             oomer.py                union_types.py
dataclass_examples.py   file.py                 hello.py                repeated_tasks.py       using_dockerfiles.py
dataframe.py            frames.py               map.py                  report_example.py
devbox_one.py           from_scratch.py         no_outputs.py           resources.py
(unionv2) johnvotta@JV---Work basics % </div>
<svg style="left:0;top:0" width="1" height="1">
<circle cx="380.5" cy="725.9" r="4.8" fill="#3f93c9"/>
<circle cx="380.5" cy="742.9" r="4.8" fill="#3f93c9"/>
<circle cx="380.5" cy="844.9" r="4" fill="none" stroke="#6a6a6a" stroke-width="1.2"/>
</svg>
<div class="abs" style="left:371px;top:750px;width:2px;height:84px;background:#4a4a4a;"></div>
<div class="abs" style="left:722.6px;top:837.4px;width:9px;height:16px;border:1px solid #cccccc"></div>
<svg style="left:1132px;top:819px" width="14" height="20" viewBox="0 0 14 20"><path d="M1 1V16L4.8 12.6L7.6 18.8L10.2 17.6L7.5 11.6H12.5Z" fill="#000" stroke="#fff" stroke-width="1.1" stroke-linejoin="round"/></svg>
<div class="abs" style="left:1495.5px;top:665.3px;width:4.5px;height:14.7px;background:#2f8fbf;"></div>
<div class="abs" style="left:1495.5px;top:705px;width:4.5px;height:54px;background:#2f8fbf;"></div>
<div class="abs" style="left:1495.5px;top:760.5px;width:4.5px;height:49.5px;background:#2f8fbf;"></div>
<div class="abs" style="left:1495.5px;top:817.5px;width:4.5px;height:7.5px;background:#2f8fbf;"></div>
<div class="abs" style="left:1495.5px;top:826.5px;width:4.5px;height:24.5px;background:#2f8fbf;"></div>
<div class="abs" style="left:0px;top:853px;width:40.5px;height:24px;background:#0078d4;"></div>
<svg style="left:0;top:0" width="1" height="1" fill="none" stroke-linecap="round" stroke-linejoin="round">
<path d="M15.5 863L19.5 866.8L15.5 870.6M25.5 859.3L21.3 863L25.5 866.7" stroke="#ffffff" stroke-width="1.3"/>
<path d="M53.5 858.5H63.5V871.5H55A1.5 1.5 0 0 1 53.5 870ZM53.5 869A1.5 1.5 0 0 1 55 867.5H63.5M56.5 858.5V867.5" stroke="#cccccc" stroke-width="1.2"/>
<circle cx="137" cy="859" r="2.3" stroke="#cccccc" stroke-width="1.2"/><circle cx="137" cy="871" r="2.3" stroke="#cccccc" stroke-width="1.2"/><circle cx="144" cy="861" r="2.3" stroke="#cccccc" stroke-width="1.2"/><path d="M137 861.3V868.7M144 863.3C144 867 138 866 137.5 868.7" stroke="#cccccc" stroke-width="1.2"/>
<path d="M210.5 863A6 6 0 0 1 222 861.5M223.5 867A6 6 0 0 1 212 868.5M222 858V861.5H218.5M212 872V868.5H215.5" stroke="#cccccc" stroke-width="1.2"/>
<path d="M252.5 857.5V872.8M248 862.3V868.2M256.7 866.5C256.7 869 255 869.8 252.5 869.8" stroke="#cccccc" stroke-width="1.2"/><circle cx="248" cy="860.4" r="2" stroke="#cccccc" stroke-width="1.2"/><circle cx="248" cy="870.2" r="2" stroke="#cccccc" stroke-width="1.2"/><circle cx="256.7" cy="864.5" r="2" stroke="#cccccc" stroke-width="1.2"/>
<path d="M296 858C292 858.5 288.5 861 285.8 865.2L289 868.3C293 865.8 295.6 862 296 858ZM285.8 865.2L283 864.6L282.3 867.6L284.3 868.2M289 868.3L289.6 871.3L286.6 872L286 869.8M283.2 869.6L282.4 872.2L285 871.4" stroke="#cccccc" stroke-width="1.2"/><circle cx="291" cy="863" r="1.2" fill="#cccccc"/>
<path d="M304.6 862.2L308.8 858L312.6 861.8L308.4 866ZM311 859.3L313.2 857.1M301.2 865.2L304.6 868.6L303 870.2A2.4 2.4 0 0 1 299.6 866.8ZM300.4 869.4L298 871.8M305.5 866L306.5 867" stroke="#cccccc" stroke-width="1.2"/>
<circle cx="420.5" cy="865" r="7" stroke="#cccccc" stroke-width="1.2"/><path d="M418 862.5L423 867.5M423 862.5L418 867.5" stroke="#cccccc" stroke-width="1.2"/>
<path d="M455 857.5L462.5 871.5H447.5Z M455 862V867" stroke="#cccccc" stroke-width="1.2"/><circle cx="455" cy="869" r="0.7" fill="#cccccc"/>
<circle cx="488" cy="865" r="7" stroke="#cccccc" stroke-width="1.2"/><path d="M488 864V869" stroke="#cccccc" stroke-width="1.4"/><circle cx="488" cy="861.5" r="0.8" fill="#cccccc"/>
<circle cx="714" cy="865" r="3.3" stroke="#cccccc" stroke-width="1.3"/><path d="M714 857V861.7M714 868.3V873" stroke="#cccccc" stroke-width="1.3"/>
</svg>
<div class="t" style="left:71px;top:856.31px;height:18.98px;line-height:18.98px;font-size:14.6px;color:#cccccc;letter-spacing:0.1px">unionv2</div>
<div class="t" style="left:153px;top:856.31px;height:18.98px;line-height:18.98px;font-size:14.6px;color:#cccccc;letter-spacing:0.1px">main*+</div>
<div class="t" style="left:318px;top:856.31px;height:18.98px;line-height:18.98px;font-size:14.6px;color:#cccccc;letter-spacing:0.2px">Launchpad</div>
<div class="t" style="left:434px;top:856.31px;height:18.98px;line-height:18.98px;font-size:14.6px;color:#cccccc;">1</div>
<div class="t" style="left:467px;top:856.31px;height:18.98px;line-height:18.98px;font-size:14.6px;color:#cccccc;">3</div>
<div class="t" style="left:502px;top:856.31px;height:18.98px;line-height:18.98px;font-size:14.6px;color:#cccccc;">1</div>
<div class="t" style="left:726px;top:856.31px;height:18.98px;line-height:18.98px;font-size:14.6px;color:#cccccc;letter-spacing:0.25px">Ketan Umare (1 hour ago)</div>
<div class="abs" style="left:912px;top:853px;width:40px;height:24px;background:#2a2a2a;"></div>
<svg style="left:0;top:0" width="1" height="1" fill="none" stroke-linecap="round"><circle cx="929.5" cy="863" r="5.5" stroke="#cccccc" stroke-width="1.2"/><path d="M927 863H932M929.5 860.5V865.5M933.5 867L938 871.5" stroke="#cccccc" stroke-width="1.3"/></svg>
<div class="t" style="left:962px;top:856.31px;height:18.98px;line-height:18.98px;font-size:14.6px;color:#cccccc;letter-spacing:0.2px">Ln 8, Col 1</div>
<div class="t" style="left:1055px;top:856.31px;height:18.98px;line-height:18.98px;font-size:14.6px;color:#cccccc;letter-spacing:0.2px">Spaces: 4</div>
<div class="t" style="left:1141px;top:856.31px;height:18.98px;line-height:18.98px;font-size:14.6px;color:#cccccc;letter-spacing:0.2px">UTF-8</div>
<div class="t" style="left:1204px;top:856.31px;height:18.98px;line-height:18.98px;font-size:14.6px;color:#cccccc;">LF</div>
<div class="t" style="left:1241px;top:856.31px;height:18.98px;line-height:18.98px;font-size:14.6px;color:#cccccc;">{ }</div>
<div class="t" style="left:1264px;top:856.31px;height:18.98px;line-height:18.98px;font-size:14.6px;color:#cccccc;letter-spacing:0.2px">Python</div>
<svg style="left:0;top:0" width="1" height="1"><rect x="1330.45" y="862.30" width="17.10" height="9.90" rx="4.95" fill="#cccccc"/><rect x="1332.70" y="864.55" width="12.60" height="5.85" rx="2.25" fill="#181818"/><rect x="1336.48" y="866.17" width="1.53" height="2.70" fill="#cccccc"/><rect x="1340.08" y="866.17" width="1.53" height="2.70" fill="#cccccc"/><circle cx="1335.40" cy="860.50" r="3.24" fill="#181818" stroke="#cccccc" stroke-width="1.53"/><circle cx="1342.60" cy="860.50" r="3.24" fill="#181818" stroke="#cccccc" stroke-width="1.53"/></svg>
<div class="t" style="left:1367px;top:856.31px;height:18.98px;line-height:18.98px;font-size:14.6px;color:#cccccc;letter-spacing:0.75px">3.13.4 64-bit</div>
<svg style="left:0;top:0" width="1" height="1" fill="none" stroke-linecap="round" stroke-linejoin="round"><path d="M1480 869.5H1493M1481.5 869.5V864A5 5 0 0 1 1491.5 864V869.5M1485 872H1489" stroke="#cccccc" stroke-width="1.2"/><circle cx="1492" cy="859.5" r="3" fill="#cccccc" stroke="#181818" stroke-width="1"/></svg>
<svg style="left:0;top:0" width="1" height="1">
<rect x="1381.5" y="109.5" width="6" height="1.1" fill="#c586c0" opacity="0.38"/>
<rect x="1388.5" y="109.5" width="2" height="1.1" fill="#4ec9b0" opacity="0.38"/>
<rect x="1381.5" y="113.5" width="6" height="1.1" fill="#c586c0" opacity="0.38"/>
<rect x="1388.5" y="113.5" width="5" height="1.1" fill="#4ec9b0" opacity="0.38"/>
<rect x="1381.5" y="115.5" width="6" height="1.1" fill="#c586c0" opacity="0.38"/>
<rect x="1388.5" y="115.5" width="5" height="1.1" fill="#4ec9b0" opacity="0.38"/>
<rect x="1393.5" y="115.5" width="1" height="1.1" fill="#d4d4d4" opacity="0.38"/>
<rect x="1394.5" y="115.5" width="6" height="1.1" fill="#4ec9b0" opacity="0.38"/>
<rect x="1381.5" y="119.5" width="3" height="1.1" fill="#9cdcfe" opacity="0.38"/>
<rect x="1385.5" y="119.5" width="1" height="1.1" fill="#d4d4d4" opacity="0.38"/>
<rect x="1387.5" y="119.5" width="5" height="1.1" fill="#4ec9b0" opacity="0.38"/>
<rect x="1392.5" y="119.5" width="1" height="1.1" fill="#d4d4d4" opacity="0.38"/>
<rect x="1393.5" y="119.5" width="15" height="1.1" fill="#4ec9b0" opacity="0.38"/>
<rect x="1408.5" y="119.5" width="1" height="1.1" fill="#ffd700" opacity="0.38"/>
<rect x="1409.5" y="119.5" width="4" height="1.1" fill="#9cdcfe" opacity="0.38"/>
<rect x="1413.5" y="119.5" width="1" height="1.1" fill="#d4d4d4" opacity="0.38"/>
<rect x="1414.5" y="119.5" width="14" height="1.1" fill="#ce9178" opacity="0.38"/>
<rect x="1428.5" y="119.5" width="1" height="1.1" fill="#d4d4d4" opacity="0.38"/>
<rect x="1430.5" y="119.5" width="9" height="1.1" fill="#9cdcfe" opacity="0.38"/>
<rect x="1439.5" y="119.5" width="1" height="1.1" fill="#d4d4d4" opacity="0.38"/>
<rect x="1440.5" y="119.5" width="5" height="1.1" fill="#4ec9b0" opacity="0.38"/>
<rect x="1445.5" y="119.5" width="1" height="1.1" fill="#d4d4d4" opacity="0.38"/>
<rect x="1446.5" y="119.5" width="9" height="1.1" fill="#4ec9b0" opacity="0.38"/>
<rect x="1455.5" y="119.5" width="1" height="1.1" fill="#da70d6" opacity="0.38"/>
<rect x="1456.5" y="119.5" width="3" height="1.1" fill="#9cdcfe" opacity="0.38"/>
<rect x="1459.5" y="119.5" width="1" height="1.1" fill="#d4d4d4" opacity="0.38"/>
<rect x="1460.5" y="119.5" width="1" height="1.1" fill="#b5cea8" opacity="0.38"/>
<rect x="1461.5" y="119.5" width="1" height="1.1" fill="#da70d6" opacity="0.38"/>
<rect x="1462.5" y="119.5" width="1" height="1.1" fill="#ffd700" opacity="0.38"/>
<rect x="1381.5" y="125.5" width="1" height="1.1" fill="#dcdcaa" opacity="0.38"/>
<rect x="1382.5" y="125.5" width="3" height="1.1" fill="#9cdcfe" opacity="0.38"/>
<rect x="1385.5" y="125.5" width="1" height="1.1" fill="#dcdcaa" opacity="0.38"/>
<rect x="1386.5" y="125.5" width="4" height="1.1" fill="#dcdcaa" opacity="0.38"/>
<rect x="1381.5" y="127.5" width="5" height="1.1" fill="#569cd6" opacity="0.38"/>
<rect x="1387.5" y="127.5" width="3" height="1.1" fill="#569cd6" opacity="0.38"/>
<rect x="1391.5" y="127.5" width="7" height="1.1" fill="#dcdcaa" opacity="0.38"/>
<rect x="1398.5" y="127.5" width="1" height="1.1" fill="#ffd700" opacity="0.38"/>
<rect x="1399.5" y="127.5" width="1" height="1.1" fill="#9cdcfe" opacity="0.38"/>
<rect x="1400.5" y="127.5" width="1" height="1.1" fill="#d4d4d4" opacity="0.38"/>
<rect x="1402.5" y="127.5" width="3" height="1.1" fill="#4ec9b0" opacity="0.38"/>
<rect x="1405.5" y="127.5" width="1" height="1.1" fill="#ffd700" opacity="0.38"/>
<rect x="1407.5" y="127.5" width="2" height="1.1" fill="#d4d4d4" opacity="0.38"/>
<rect x="1410.5" y="127.5" width="3" height="1.1" fill="#4ec9b0" opacity="0.38"/>
<rect x="1413.5" y="127.5" width="1" height="1.1" fill="#d4d4d4" opacity="0.38"/>
<rect x="1385.5" y="129.5" width="3" height="1.1" fill="#ce9178" opacity="0.38"/>
<rect x="1385.5" y="131.5" width="1" height="1.1" fill="#ce9178" opacity="0.38"/>
<rect x="1387.5" y="131.5" width="6" height="1.1" fill="#ce9178" opacity="0.38"/>
<rect x="1394.5" y="131.5" width="4" height="1.1" fill="#ce9178" opacity="0.38"/>
<rect x="1399.5" y="131.5" width="4" height="1.1" fill="#ce9178" opacity="0.38"/>
<rect x="1404.5" y="131.5" width="7" height="1.1" fill="#ce9178" opacity="0.38"/>
<rect x="1412.5" y="131.5" width="3" height="1.1" fill="#ce9178" opacity="0.38"/>
<rect x="1416.5" y="131.5" width="6" height="1.1" fill="#ce9178" opacity="0.38"/>
<rect x="1423.5" y="131.5" width="2" height="1.1" fill="#ce9178" opacity="0.38"/>
<rect x="1426.5" y="131.5" width="3" height="1.1" fill="#ce9178" opacity="0.38"/>
<rect x="1430.5" y="131.5" width="5" height="1.1" fill="#ce9178" opacity="0.38"/>
<rect x="1436.5" y="131.5" width="8" height="1.1" fill="#ce9178" opacity="0.38"/>
<rect x="1385.5" y="133.5" width="3" height="1.1" fill="#ce9178" opacity="0.38"/>
<rect x="1385.5" y="135.5" width="6" height="1.1" fill="#c586c0" opacity="0.38"/>
<rect x="1392.5" y="135.5" width="1" height="1.1" fill="#9cdcfe" opacity="0.38"/>
<rect x="1394.5" y="135.5" width="1" height="1.1" fill="#d4d4d4" opacity="0.38"/>
<rect x="1396.5" y="135.5" width="1" height="1.1" fill="#9cdcfe" opacity="0.38"/>
<rect x="1381.5" y="141.5" width="1" height="1.1" fill="#dcdcaa" opacity="0.38"/>
<rect x="1382.5" y="141.5" width="3" height="1.1" fill="#9cdcfe" opacity="0.38"/>
<rect x="1385.5" y="141.5" width="1" height="1.1" fill="#dcdcaa" opacity="0.38"/>
<rect x="1386.5" y="141.5" width="4" height="1.1" fill="#dcdcaa" opacity="0.38"/>
<rect x="1381.5" y="143.5" width="5" height="1.1" fill="#569cd6" opacity="0.38"/>
<rect x="1387.5" y="143.5" width="3" height="1.1" fill="#569cd6" opacity="0.38"/>
<rect x="1391.5" y="143.5" width="20" height="1.1" fill="#dcdcaa" opacity="0.38"/>
<rect x="1411.5" y="143.5" width="1" height="1.1" fill="#ffd700" opacity="0.38"/>
<rect x="1412.5" y="143.5" width="1" height="1.1" fill="#9cdcfe" opacity="0.38"/>
<rect x="1413.5" y="143.5" width="1" height="1.1" fill="#d4d4d4" opacity="0.38"/>
<rect x="1415.5" y="143.5" width="3" height="1.1" fill="#4ec9b0" opacity="0.38"/>
<rect x="1418.5" y="143.5" width="1" height="1.1" fill="#d4d4d4" opacity="0.38"/>
<rect x="1420.5" y="143.5" width="13" height="1.1" fill="#9cdcfe" opacity="0.38"/>
<rect x="1433.5" y="143.5" width="1" height="1.1" fill="#d4d4d4" opacity="0.38"/>
<rect x="1435.5" y="143.5" width="3" height="1.1" fill="#4ec9b0" opacity="0.38"/>
<rect x="1438.5" y="143.5" width="1" height="1.1" fill="#ffd700" opacity="0.38"/>
<rect x="1440.5" y="143.5" width="2" height="1.1" fill="#d4d4d4" opacity="0.38"/>
<rect x="1443.5" y="143.5" width="4" height="1.1" fill="#4ec9b0" opacity="0.38"/>
<rect x="1447.5" y="143.5" width="1" height="1.1" fill="#ffd700" opacity="0.38"/>
<rect x="1448.5" y="143.5" width="3" height="1.1" fill="#4ec9b0" opacity="0.38"/>
<rect x="1451.5" y="143.5" width="1" height="1.1" fill="#ffd700" opacity="0.38"/>
<rect x="1452.5" y="143.5" width="1" height="1.1" fill="#d4d4d4" opacity="0.38"/>
<rect x="1385.5" y="145.5" width="3" height="1.1" fill="#ce9178" opacity="0.38"/>
<rect x="1385.5" y="147.5" width="1" height="1.1" fill="#ce9178" opacity="0.38"/>
<rect x="1387.5" y="147.5" width="8" height="1.1" fill="#ce9178" opacity="0.38"/>
<rect x="1396.5" y="147.5" width="4" height="1.1" fill="#ce9178" opacity="0.38"/>
<rect x="1401.5" y="147.5" width="9" height="1.1" fill="#ce9178" opacity="0.38"/>
<rect x="1411.5" y="147.5" width="1" height="1.1" fill="#ce9178" opacity="0.38"/>
<rect x="1413.5" y="147.5" width="6" height="1.1" fill="#ce9178" opacity="0.38"/>
<rect x="1420.5" y="147.5" width="9" height="1.1" fill="#ce9178" opacity="0.38"/>
<rect x="1430.5" y="147.5" width="4" height="1.1" fill="#ce9178" opacity="0.38"/>
<rect x="1435.5" y="147.5" width="5" height="1.1" fill="#ce9178" opacity="0.38"/>
<rect x="1441.5" y="147.5" width="9" height="1.1" fill="#ce9178" opacity="0.38"/>
<rect x="1385.5" y="149.5" width="2" height="1.1" fill="#ce9178" opacity="0.38"/>
<rect x="1388.5" y="149.5" width="7" height="1.1" fill="#ce9178" opacity="0.38"/>
<rect x="1396.5" y="149.5" width="1" height="1.1" fill="#ce9178" opacity="0.38"/>
<rect x="1398.5" y="149.5" width="4" height="1.1" fill="#ce9178" opacity="0.38"/>
<rect x="1403.5" y="149.5" width="2" height="1.1" fill="#ce9178" opacity="0.38"/>
<rect x="1406.5" y="149.5" width="7" height="1.1" fill="#ce9178" opacity="0.38"/>
<rect x="1414.5" y="149.5" width="2" height="1.1" fill="#ce9178" opacity="0.38"/>
<rect x="1417.5" y="149.5" width="8" height="1.1" fill="#ce9178" opacity="0.38"/>
<rect x="1426.5" y="149.5" width="4" height="1.1" fill="#ce9178" opacity="0.38"/>
<rect x="1431.5" y="149.5" width="1" height="1.1" fill="#ce9178" opacity="0.38"/>
<rect x="1433.5" y="149.5" width="2" height="1.1" fill="#ce9178" opacity="0.38"/>
<rect x="1436.5" y="149.5" width="4" height="1.1" fill="#ce9178" opacity="0.38"/>
<rect x="1385.5" y="151.5" width="3" height="1.1" fill="#ce9178" opacity="0.38"/>
<rect x="1385.5" y="153.5" width="5" height="1.1" fill="#dcdcaa" opacity="0.38"/>
<rect x="1390.5" y="153.5" width="1" height="1.1" fill="#ffd700" opacity="0.38"/>
<rect x="1391.5" y="153.5" width="1" height="1.1" fill="#569cd6" opacity="0.38"/>
<rect x="1392.5" y="153.5" width="9" height="1.1" fill="#ce9178" opacity="0.38"/>
<rect x="1402.5" y="153.5" width="6" height="1.1" fill="#ce9178" opacity="0.38"/>
<rect x="1409.5" y="153.5" width="4" height="1.1" fill="#ce9178" opacity="0.38"/>
<rect x="1414.5" y="153.5" width="2" height="1.1" fill="#ce9178" opacity="0.38"/>
<rect x="1416.5" y="153.5" width="1" height="1.1" fill="#da70d6" opacity="0.38"/>
<rect x="1417.5" y="153.5" width="1" height="1.1" fill="#9cdcfe" opacity="0.38"/>
<rect x="1418.5" y="153.5" width="1" height="1.1" fill="#da70d6" opacity="0.38"/>
<rect x="1420.5" y="153.5" width="3" height="1.1" fill="#ce9178" opacity="0.38"/>
<rect x="1424.5" y="153.5" width="14" height="1.1" fill="#ce9178" opacity="0.38"/>
<rect x="1438.5" y="153.5" width="1" height="1.1" fill="#da70d6" opacity="0.38"/>
<rect x="1439.5" y="153.5" width="13" height="1.1" fill="#9cdcfe" opacity="0.38"/>
<rect x="1452.5" y="153.5" width="1" height="1.1" fill="#da70d6" opacity="0.38"/>
<rect x="1453.5" y="153.5" width="1" height="1.1" fill="#ce9178" opacity="0.38"/>
<rect x="1454.5" y="153.5" width="1" height="1.1" fill="#ffd700" opacity="0.38"/>
<rect x="1385.5" y="155.5" width="4" height="1.1" fill="#569cd6" opacity="0.38"/>
<rect x="1390.5" y="155.5" width="27" height="1.1" fill="#dcdcaa" opacity="0.38"/>
<rect x="1389.5" y="157.5" width="7" height="1.1" fill="#569cd6" opacity="0.38"/>
<rect x="1397.5" y="157.5" width="1" height="1.1" fill="#dcdcaa" opacity="0.38"/>
<rect x="1399.5" y="157.5" width="5" height="1.1" fill="#9cdcfe" opacity="0.38"/>
<rect x="1405.5" y="157.5" width="27" height="1.1" fill="#ce9178" opacity="0.38"/>
<rect x="1433.5" y="157.5" width="3" height="1.1" fill="#4ec9b0" opacity="0.38"/>
<rect x="1437.5" y="157.5" width="1" height="1.1" fill="#d4d4d4" opacity="0.38"/>
<rect x="1439.5" y="157.5" width="2" height="1.1" fill="#569cd6" opacity="0.38"/>
<rect x="1442.5" y="157.5" width="10" height="1.1" fill="#dcdcaa" opacity="0.38"/>
<rect x="1389.5" y="161.5" width="3" height="1.1" fill="#569cd6" opacity="0.38"/>
<rect x="1393.5" y="161.5" width="2" height="1.1" fill="#dcdcaa" opacity="0.38"/>
<rect x="1396.5" y="161.5" width="1" height="1.1" fill="#9cdcfe" opacity="0.38"/>
<rect x="1398.5" y="161.5" width="2" height="1.1" fill="#ce9178" opacity="0.38"/>
<rect x="1389.5" y="163.5" width="2" height="1.1" fill="#569cd6" opacity="0.38"/>
<rect x="1392.5" y="163.5" width="13" height="1.1" fill="#dcdcaa" opacity="0.38"/>
<rect x="1406.5" y="163.5" width="2" height="1.1" fill="#9cdcfe" opacity="0.38"/>
<rect x="1409.5" y="163.5" width="2" height="1.1" fill="#ce9178" opacity="0.38"/>
<rect x="1393.5" y="165.5" width="4" height="1.1" fill="#569cd6" opacity="0.38"/>
<rect x="1398.5" y="165.5" width="5" height="1.1" fill="#dcdcaa" opacity="0.38"/>
<rect x="1404.5" y="165.5" width="12" height="1.1" fill="#9cdcfe" opacity="0.38"/>
<rect x="1393.5" y="167.5" width="6" height="1.1" fill="#569cd6" opacity="0.38"/>
<rect x="1400.5" y="167.5" width="31" height="1.1" fill="#dcdcaa" opacity="0.38"/>
<rect x="1432.5" y="167.5" width="2" height="1.1" fill="#9cdcfe" opacity="0.38"/>
<rect x="1435.5" y="167.5" width="2" height="1.1" fill="#ce9178" opacity="0.38"/>
<rect x="1397.5" y="169.5" width="14" height="1.1" fill="#569cd6" opacity="0.38"/>
<rect x="1412.5" y="169.5" width="5" height="1.1" fill="#dcdcaa" opacity="0.38"/>
<rect x="1418.5" y="169.5" width="2" height="1.1" fill="#9cdcfe" opacity="0.38"/>
<rect x="1421.5" y="169.5" width="5" height="1.1" fill="#ce9178" opacity="0.38"/>
<rect x="1427.5" y="169.5" width="4" height="1.1" fill="#4ec9b0" opacity="0.38"/>
<rect x="1432.5" y="169.5" width="5" height="1.1" fill="#d4d4d4" opacity="0.38"/>
<rect x="1397.5" y="171.5" width="5" height="1.1" fill="#569cd6" opacity="0.38"/>
<rect x="1403.5" y="171.5" width="44" height="1.1" fill="#dcdcaa" opacity="0.38"/>
<rect x="1448.5" y="171.5" width="19" height="1.1" fill="#9cdcfe" opacity="0.38"/>
<rect x="1468.5" y="171.5" width="7" height="1.1" fill="#ce9178" opacity="0.38"/>
<rect x="1476.5" y="171.5" width="2" height="1.1" fill="#4ec9b0" opacity="0.38"/>
<rect x="1479.5" y="171.5" width="0.5" height="1.1" fill="#d4d4d4" opacity="0.38"/>
<rect x="1393.5" y="173.5" width="16" height="1.1" fill="#569cd6" opacity="0.38"/>
<rect x="1410.5" y="173.5" width="1" height="1.1" fill="#dcdcaa" opacity="0.38"/>
<rect x="1412.5" y="173.5" width="2" height="1.1" fill="#9cdcfe" opacity="0.38"/>
<rect x="1385.5" y="177.5" width="6" height="1.1" fill="#569cd6" opacity="0.38"/>
<rect x="1392.5" y="177.5" width="3" height="1.1" fill="#dcdcaa" opacity="0.38"/>
<rect x="1381.5" y="183.5" width="2" height="1.1" fill="#569cd6" opacity="0.38"/>
<rect x="1384.5" y="183.5" width="8" height="1.1" fill="#dcdcaa" opacity="0.38"/>
<rect x="1393.5" y="183.5" width="2" height="1.1" fill="#9cdcfe" opacity="0.38"/>
<rect x="1396.5" y="183.5" width="11" height="1.1" fill="#ce9178" opacity="0.38"/>
<rect x="1385.5" y="185.5" width="10" height="1.1" fill="#569cd6" opacity="0.38"/>
<rect x="1385.5" y="187.5" width="3" height="1.1" fill="#569cd6" opacity="0.38"/>
<rect x="1389.5" y="187.5" width="1" height="1.1" fill="#dcdcaa" opacity="0.38"/>
<rect x="1391.5" y="187.5" width="30" height="1.1" fill="#9cdcfe" opacity="0.38"/>
<rect x="1385.5" y="189.5" width="14" height="1.1" fill="#569cd6" opacity="0.38"/>
<rect x="1400.5" y="189.5" width="5" height="1.1" fill="#dcdcaa" opacity="0.38"/>
<rect x="1406.5" y="189.5" width="16" height="1.1" fill="#9cdcfe" opacity="0.38"/>
<rect x="1385.5" y="191.5" width="10" height="1.1" fill="#569cd6" opacity="0.38"/>
</svg>
<div class="abs" style="left:1495px;top:109px;width:5px;height:178px;background:#2e2e2e;"></div>
<div class="abs" style="left:1495px;top:168px;width:5px;height:2px;background:#8a8a8a;"></div>
<svg style="left:0;top:0" width="20" height="877"><path d="M0 0H12A11.5 11.5 0 0 0 0.5 11.5V0Z" fill="#0a0a0a"/><path d="M0.6 852V11.5A11 11 0 0 1 11.5 0.6" fill="none" stroke="#4a4a4a" stroke-width="1.2"/><path d="M0 877V866A11 11 0 0 0 11 877Z" fill="#0a0a0a"/></svg>
<div class="abs" style="left:0px;top:41px;width:2.4px;height:56px;background:#0078d4;"></div>
</body></html>
